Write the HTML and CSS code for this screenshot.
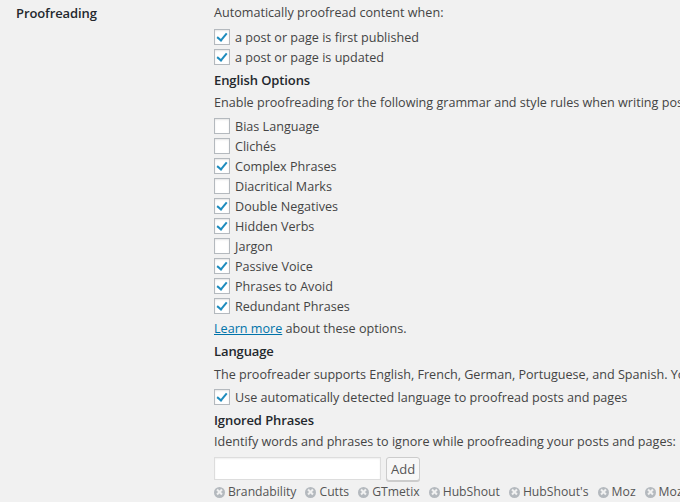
FILE: index.html
```html
<!DOCTYPE html>
<html>
<head>
<meta charset="utf-8">
<link rel="stylesheet" href="styles.css">
</head>
<body>
<div class="row">
  <div class="th">Proofreading</div>
  <div class="td">
    <p class="txt first">Automatically proofread content when:</p>
    <div class="checks">
      <label class="chk"><span class="box on"></span><span class="lbl">a post or page is first published</span></label>
      <label class="chk"><span class="box on"></span><span class="lbl">a post or page is updated</span></label>
    </div>
    <h4 class="head">English Options</h4>
    <p class="txt t2">Enable proofreading for the following grammar and style rules when writing posts and pages:</p>
    <div class="checks c2">
      <label class="chk"><span class="box"></span><span class="lbl">Bias Language</span></label>
      <label class="chk"><span class="box"></span><span class="lbl">Clichés</span></label>
      <label class="chk"><span class="box on"></span><span class="lbl">Complex Phrases</span></label>
      <label class="chk"><span class="box"></span><span class="lbl">Diacritical Marks</span></label>
      <label class="chk"><span class="box on"></span><span class="lbl">Double Negatives</span></label>
      <label class="chk"><span class="box on"></span><span class="lbl">Hidden Verbs</span></label>
      <label class="chk"><span class="box"></span><span class="lbl">Jargon</span></label>
      <label class="chk"><span class="box on"></span><span class="lbl">Passive Voice</span></label>
      <label class="chk"><span class="box on"></span><span class="lbl">Phrases to Avoid</span></label>
      <label class="chk"><span class="box on"></span><span class="lbl">Redundant Phrases</span></label>
    </div>
    <p class="txt t2"><a class="link" href="#">Learn more</a> about these options.</p>
    <h4 class="head">Language</h4>
    <p class="txt t3">The proofreader supports English, French, German, Portuguese, and Spanish. Your user interface language (see above) is the default proofreading language.</p>
    <div class="checks c3">
      <label class="chk"><span class="box on"></span><span class="lbl">Use automatically detected language to proofread posts and pages</span></label>
    </div>
    <h4 class="head">Ignored Phrases</h4>
    <p class="txt t4">Identify words and phrases to ignore while proofreading your posts and pages:</p>
    <div class="addrow">
      <input class="field" type="text">
      <button class="btn">Add</button>
    </div>
    <div class="tags">
      <span class="tag"><span class="x"></span>Brandability</span>
      <span class="tag"><span class="x"></span>Cutts</span>
      <span class="tag"><span class="x"></span>GTmetix</span>
      <span class="tag"><span class="x"></span>HubShout</span>
      <span class="tag"><span class="x"></span>HubShout's</span>
      <span class="tag"><span class="x"></span>Moz</span>
      <span class="tag"><span class="x"></span>MozCon</span>
    </div>
  </div>
</div>
</body>
</html>
```

FILE: styles.css
```css
html, body {
  margin: 0;
  padding: 0;
  background: #f1f1f1;
  width: 680px;
  height: 502px;
  overflow: hidden;
}
body {
  font-family: "Open Sans", "Liberation Sans", sans-serif;
  font-size: 12.6px;
  color: #444;
}
.row {
  display: flex;
  white-space: nowrap;
}
.th {
  width: 198px;
  flex: none;
  padding: 3px 0 0 16px;
  font-size: 13px;
  letter-spacing: -0.1px;
  font-weight: 600;
  line-height: 20px;
  color: #23282d;
}
.td {
  flex: none;
  display: flex;
  flex-direction: column;
  align-items: flex-start;
}
.txt {
  margin: 0;
  line-height: 22px;
  height: 20px;
}
.first { margin-top: 2px; }
.t2 { margin-top: 2px; }
.t3 { margin-top: 3px; }
.t4 { margin-top: 1px; }
.checks {
  display: flex;
  flex-direction: column;
  margin-top: 5px;
}
.c2 { margin-top: 4px; }
.c3 { margin-top: 3px; }
.chk {
  display: flex;
  align-items: center;
  height: 20px;
  line-height: 20px;
}
.lbl {
  padding-top: 2px;
}
.box {
  width: 14px;
  height: 14px;
  border: 1px solid #b4b9be;
  background: #fff;
  box-shadow: inset 0 1px 2px rgba(0,0,0,0.1);
  margin-right: 5px;
  position: relative;
  flex: none;
}
.box.on::after {
  content: "";
  position: absolute;
  left: 4px;
  top: 1px;
  width: 4px;
  height: 8px;
  border: solid #1e8cbe;
  border-width: 0 2px 2px 0;
  transform: rotate(40deg);
}
.head {
  margin: 3px 0 0;
  font-size: 13px;
  letter-spacing: -0.1px;
  font-weight: 600;
  line-height: 20px;
  color: #23282d;
}
.link {
  color: #0073aa;
  text-decoration: underline;
}
.addrow {
  display: flex;
  align-items: flex-start;
  gap: 5px;
  margin-top: 6px;
}
.field {
  width: 167px;
  height: 23px;
  box-sizing: border-box;
  margin: 0;
  border: 1px solid #ddd;
  background: #fff;
  box-shadow: inset 0 1px 2px rgba(0,0,0,0.07);
  padding: 0 4px;
}
.btn {
  height: 24px;
  box-sizing: border-box;
  margin: 0;
  padding: 0 4px;
  border: 1px solid #ccc;
  border-radius: 3px;
  background: #f7f7f7;
  box-shadow: 0 1px 0 #ccc;
  font-family: "Open Sans", "Liberation Sans", sans-serif;
  font-size: 13px;
  color: #555;
  line-height: 22px;
}
.tags {
  display: flex;
  gap: 9px;
  margin-top: 1px;
  line-height: 20px;
  font-size: 12.2px;
}
.tag {
  display: flex;
  align-items: center;
  color: #555;
}
.x {
  width: 11px;
  height: 11px;
  border-radius: 50%;
  background: #b4b9be;
  margin-right: 3px;
  position: relative;
  flex: none;
}
.x::before, .x::after {
  content: "";
  position: absolute;
  left: 2px;
  top: 4.5px;
  width: 7px;
  height: 2px;
  background: #f1f1f1;
  transform: rotate(45deg);
}
.x::after { transform: rotate(-45deg); }
```
